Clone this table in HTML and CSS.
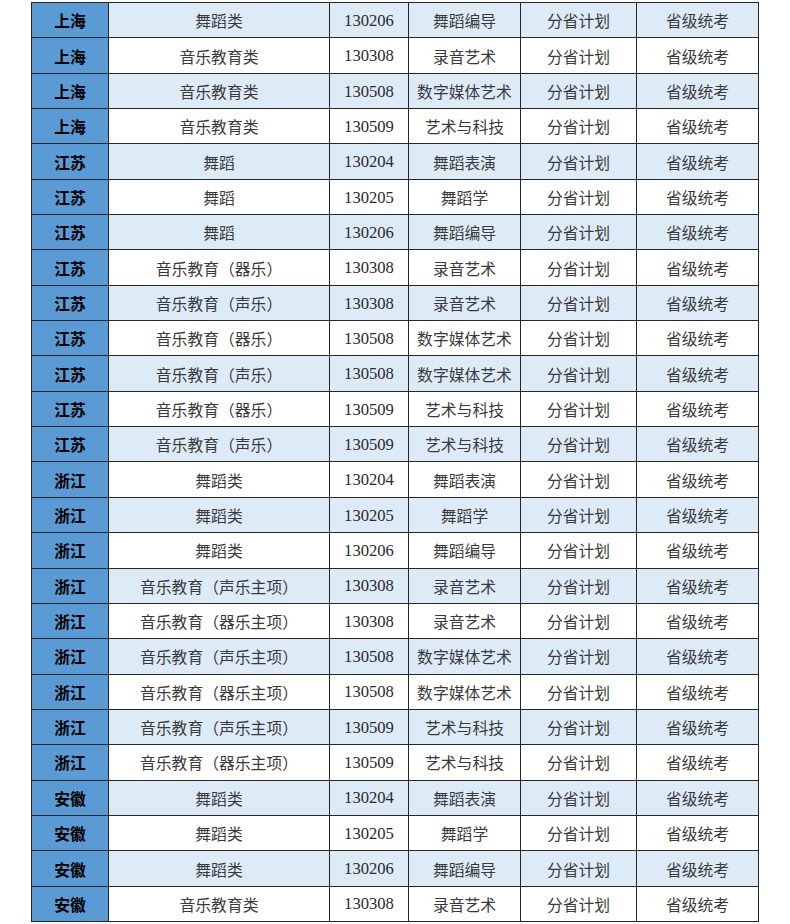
FILE: index.html
```html
<!DOCTYPE html>
<html lang="zh">
<head>
<meta charset="utf-8">
<link rel="stylesheet" href="styles.css">
</head>
<body>
<table class="grid">
<colgroup>
<col class="c1"><col class="c2"><col class="c3"><col class="c4"><col class="c5"><col class="c6">
</colgroup>
<tbody>
<tr class="alt"><td class="prov">上海</td><td>舞蹈类</td><td class="num">130206</td><td>舞蹈编导</td><td>分省计划</td><td>省级统考</td></tr>
<tr><td class="prov">上海</td><td>音乐教育类</td><td class="num">130308</td><td>录音艺术</td><td>分省计划</td><td>省级统考</td></tr>
<tr class="alt"><td class="prov">上海</td><td>音乐教育类</td><td class="num">130508</td><td>数字媒体艺术</td><td>分省计划</td><td>省级统考</td></tr>
<tr><td class="prov">上海</td><td>音乐教育类</td><td class="num">130509</td><td>艺术与科技</td><td>分省计划</td><td>省级统考</td></tr>
<tr class="alt"><td class="prov">江苏</td><td>舞蹈</td><td class="num">130204</td><td>舞蹈表演</td><td>分省计划</td><td>省级统考</td></tr>
<tr><td class="prov">江苏</td><td>舞蹈</td><td class="num">130205</td><td>舞蹈学</td><td>分省计划</td><td>省级统考</td></tr>
<tr class="alt"><td class="prov">江苏</td><td>舞蹈</td><td class="num">130206</td><td>舞蹈编导</td><td>分省计划</td><td>省级统考</td></tr>
<tr><td class="prov">江苏</td><td>音乐教育（器乐）</td><td class="num">130308</td><td>录音艺术</td><td>分省计划</td><td>省级统考</td></tr>
<tr class="alt"><td class="prov">江苏</td><td>音乐教育（声乐）</td><td class="num">130308</td><td>录音艺术</td><td>分省计划</td><td>省级统考</td></tr>
<tr><td class="prov">江苏</td><td>音乐教育（器乐）</td><td class="num">130508</td><td>数字媒体艺术</td><td>分省计划</td><td>省级统考</td></tr>
<tr class="alt"><td class="prov">江苏</td><td>音乐教育（声乐）</td><td class="num">130508</td><td>数字媒体艺术</td><td>分省计划</td><td>省级统考</td></tr>
<tr><td class="prov">江苏</td><td>音乐教育（器乐）</td><td class="num">130509</td><td>艺术与科技</td><td>分省计划</td><td>省级统考</td></tr>
<tr class="alt"><td class="prov">江苏</td><td>音乐教育（声乐）</td><td class="num">130509</td><td>艺术与科技</td><td>分省计划</td><td>省级统考</td></tr>
<tr><td class="prov">浙江</td><td>舞蹈类</td><td class="num">130204</td><td>舞蹈表演</td><td>分省计划</td><td>省级统考</td></tr>
<tr class="alt"><td class="prov">浙江</td><td>舞蹈类</td><td class="num">130205</td><td>舞蹈学</td><td>分省计划</td><td>省级统考</td></tr>
<tr><td class="prov">浙江</td><td>舞蹈类</td><td class="num">130206</td><td>舞蹈编导</td><td>分省计划</td><td>省级统考</td></tr>
<tr class="alt"><td class="prov">浙江</td><td>音乐教育（声乐主项）</td><td class="num">130308</td><td>录音艺术</td><td>分省计划</td><td>省级统考</td></tr>
<tr><td class="prov">浙江</td><td>音乐教育（器乐主项）</td><td class="num">130308</td><td>录音艺术</td><td>分省计划</td><td>省级统考</td></tr>
<tr class="alt"><td class="prov">浙江</td><td>音乐教育（声乐主项）</td><td class="num">130508</td><td>数字媒体艺术</td><td>分省计划</td><td>省级统考</td></tr>
<tr><td class="prov">浙江</td><td>音乐教育（器乐主项）</td><td class="num">130508</td><td>数字媒体艺术</td><td>分省计划</td><td>省级统考</td></tr>
<tr class="alt"><td class="prov">浙江</td><td>音乐教育（声乐主项）</td><td class="num">130509</td><td>艺术与科技</td><td>分省计划</td><td>省级统考</td></tr>
<tr><td class="prov">浙江</td><td>音乐教育（器乐主项）</td><td class="num">130509</td><td>艺术与科技</td><td>分省计划</td><td>省级统考</td></tr>
<tr class="alt"><td class="prov">安徽</td><td>舞蹈类</td><td class="num">130204</td><td>舞蹈表演</td><td>分省计划</td><td>省级统考</td></tr>
<tr><td class="prov">安徽</td><td>舞蹈类</td><td class="num">130205</td><td>舞蹈学</td><td>分省计划</td><td>省级统考</td></tr>
<tr class="alt"><td class="prov">安徽</td><td>舞蹈类</td><td class="num">130206</td><td>舞蹈编导</td><td>分省计划</td><td>省级统考</td></tr>
<tr><td class="prov">安徽</td><td>音乐教育类</td><td class="num">130308</td><td>录音艺术</td><td>分省计划</td><td>省级统考</td></tr>
</tbody>
</table>
</body>
</html>
```

FILE: styles.css
```css
html, body {
  margin: 0;
  padding: 0;
  background: #ffffff;
}
body {
  padding: 2px 0 0 31px;
  font-family: "Noto Sans CJK SC", "Noto Sans", sans-serif;
}
.grid {
  border-collapse: collapse;
  table-layout: fixed;
  width: 727px;
  font-size: 15.8px;
  color: #3a3a3a;
}
.c1 { width: 77px; }
.c2 { width: 221px; }
.c3 { width: 79px; }
.c4 { width: 112px; }
.c5 { width: 116px; }
.c6 { width: 122px; }
.grid tr {
  height: 35.35px;
}
.grid td {
  border: 1px solid #262626;
  padding: 2px 0 0;
  text-align: center;
  vertical-align: middle;
  line-height: 1;
  white-space: nowrap;
  background: #ffffff;
}
.grid tr.alt td {
  background: #ddebf7;
}
.grid td.prov,
.grid tr.alt td.prov {
  background: #5b9bd5;
  color: #000000;
  font-weight: bold;
}
.grid td.num {
  font-family: "Liberation Serif", "Times New Roman", serif;
  font-size: 16.6px;
  color: #2a2a2a;
}
```
